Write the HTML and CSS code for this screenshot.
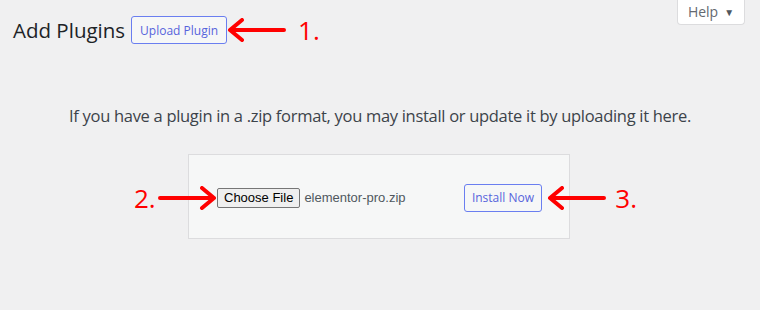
FILE: index.html
```html
<!DOCTYPE html>
<html lang="en">
<head>
  <meta charset="UTF-8">
  <title>Add Plugins</title>
  <link rel="stylesheet" href="styles.css">
</head>
<body>
  <div class="help-tab">Help <span class="caret">&#9660;</span></div>

  <div class="page-head">
    <h1>Add Plugins</h1>
    <button class="wp-button">Upload Plugin</button>
    <svg class="arrow" width="60" height="24" viewBox="0 0 60 24">
      <path d="M58 12H4M16 2L4 12L16 22" fill="none" stroke="#f00" stroke-width="4" stroke-linecap="round" stroke-linejoin="round"/>
    </svg>
    <span class="step">1.</span>
  </div>

  <p class="upload-help">If you have a plugin in a .zip format, you may install or update it by uploading it here.</p>

  <div class="upload-wrap">
    <div class="upload-box">
      <div class="file-pick">
        <button class="file-button">Choose File</button>
        <span class="file-name">elementor-pro.zip</span>
      </div>
      <button class="wp-button install">Install Now</button>

      <div class="note note-left">
        <span class="step">2.</span>
        <svg class="arrow" width="60" height="24" viewBox="0 0 60 24">
          <path d="M2 12H56M44 2L56 12L44 22" fill="none" stroke="#f00" stroke-width="4" stroke-linecap="round" stroke-linejoin="round"/>
        </svg>
      </div>
      <div class="note note-right">
        <svg class="arrow" width="60" height="24" viewBox="0 0 60 24">
          <path d="M58 12H4M16 2L4 12L16 22" fill="none" stroke="#f00" stroke-width="4" stroke-linecap="round" stroke-linejoin="round"/>
        </svg>
        <span class="step">3.</span>
      </div>
    </div>
  </div>
</body>
</html>
```

FILE: styles.css
```css
body {
  margin: 0;
  background: #f0f0f1;
  font-family: "Open Sans", "Noto Sans", sans-serif;
  color: #3c434a;
  position: relative;
  height: 310px;
  overflow: hidden;
}
.help-tab {
  position: absolute;
  top: -1px;
  right: 15px;
  width: 68px;
  height: 26px;
  box-sizing: border-box;
  background: #fff;
  border: 1px solid #dcdcde;
  border-top: none;
  border-radius: 0 0 4px 4px;
  font-size: 14px;
  color: #646970;
  display: flex;
  align-items: center;
  justify-content: center;
  gap: 6px;
}
.caret {
  font-size: 10px;
  color: #50575e;
}
.page-head {
  display: flex;
  align-items: center;
  padding: 16px 0 0 13px;
  height: 28px;
}
h1 {
  margin: 0 6px 0 0;
  font-size: 20.5px;
  font-weight: 400;
  color: #1d2327;
}
.wp-button {
  font-family: inherit;
  font-size: 12px;
  color: #5664dc;
  background: #f6f7f7;
  border: 1px solid #6a7ef0;
  border-radius: 3px;
  height: 28px;
  padding: 0 8px;
}
.arrow {
  display: block;
}
.page-head .arrow {
  margin-left: -1px;
}
.step {
  font-size: 26px;
  color: #f00;
  line-height: 1;
}
.page-head .step {
  margin-left: 12px;
}
.upload-help {
  margin: 60px 0 0;
  text-align: center;
  font-size: 16.5px;
  letter-spacing: -0.3px;
}
.upload-wrap {
  display: flex;
  justify-content: center;
  padding-top: 27px;
}
.upload-box {
  position: relative;
  width: 382px;
  height: 85px;
  box-sizing: border-box;
  margin-left: -2px;
  background: #f6f7f7;
  border: 1px solid #dcdcde;
  display: flex;
  align-items: center;
  justify-content: space-between;
  padding: 0 27px 0 28px;
}
.file-pick {
  display: flex;
  align-items: center;
  gap: 4px;
  margin-top: 2px;
}
.file-button {
  font-family: "Liberation Sans", Arial, sans-serif;
  font-size: 13px;
  color: #000;
  background: #efefef;
  border: 1px solid #767676;
  border-radius: 2px;
  height: 20px;
  padding: 0 6px;
}
.file-name {
  font-family: "Liberation Sans", Arial, sans-serif;
  font-size: 13px;
  color: #50575e;
}
.install {
  height: 28px;
  padding: 0 7px;
  margin-top: 2px;
}
.note {
  position: absolute;
  top: 30px;
  display: flex;
  align-items: center;
}
.note-left {
  left: -55px;
}
.note-left .step {
  margin-right: 2px;
}
.note-right {
  right: -68px;
}
.note-right .step {
  margin-left: 9px;
}
```
